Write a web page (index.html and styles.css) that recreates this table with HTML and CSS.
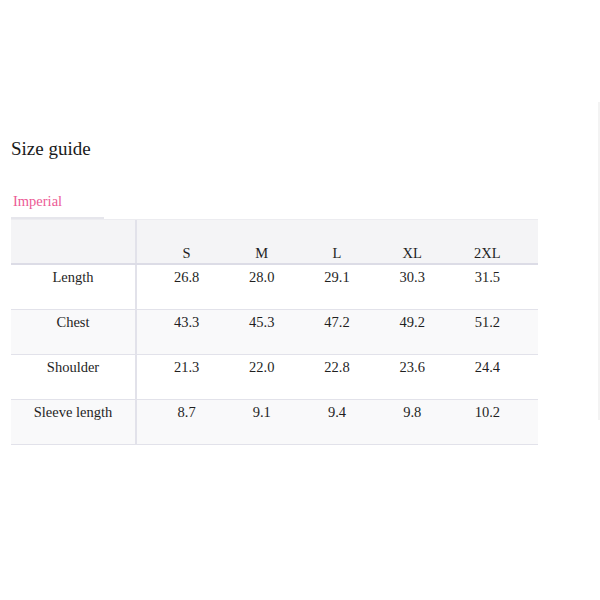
FILE: index.html
```html
<!DOCTYPE html>
<html>
<head>
<meta charset="utf-8">
<link rel="stylesheet" href="styles.css">
</head>
<body>
<div class="page">
  <h1 class="title">Size guide</h1>
  <div class="tabs"><div class="tab">Imperial</div></div>
  <div class="table">
    <div class="row head">
      <div class="label"></div>
      <div class="vals"><span>S</span><span>M</span><span>L</span><span>XL</span><span>2XL</span></div>
    </div>
    <div class="row">
      <div class="label">Length</div>
      <div class="vals"><span>26.8</span><span>28.0</span><span>29.1</span><span>30.3</span><span>31.5</span></div>
    </div>
    <div class="row alt">
      <div class="label">Chest</div>
      <div class="vals"><span>43.3</span><span>45.3</span><span>47.2</span><span>49.2</span><span>51.2</span></div>
    </div>
    <div class="row">
      <div class="label">Shoulder</div>
      <div class="vals"><span>21.3</span><span>22.0</span><span>22.8</span><span>23.6</span><span>24.4</span></div>
    </div>
    <div class="row alt">
      <div class="label">Sleeve length</div>
      <div class="vals"><span>8.7</span><span>9.1</span><span>9.4</span><span>9.8</span><span>10.2</span></div>
    </div>
  </div>
</div>
<div class="edge"></div>
</body>
</html>
```
FILE: styles.css
```css
html, body {
  margin: 0;
  padding: 0;
  background: #ffffff;
}
body {
  font-family: "Liberation Serif", "DejaVu Serif", serif;
  color: #1f1f1f;
}
.page {
  padding: 0 11px;
}
.title {
  margin: 138px 0 0 0;
  font-family: "Liberation Serif", "DejaVu Serif", serif;
  font-size: 19px;
  line-height: 22px;
  font-weight: normal;
  color: #1a1a1a;
}
.tabs {
  margin-top: 33px;
  display: flex;
}
.tab {
  width: 91px;
  padding: 0 0 7px 2px;
  font-size: 14.5px;
  line-height: 17px;
  color: #ec5a95;
  border-bottom: 2px solid #e6e6ec;
}
.table {
  width: 527px;
  border-top: 1px solid #ececf0;
}
.row {
  display: flex;
  height: 44px;
  border-bottom: 1px solid #e2e2ea;
  font-size: 14.5px;
  line-height: 17px;
}
.row.head {
  height: 43px;
  background: #f4f4f6;
  border-bottom: 2px solid #dcdce6;
  align-items: flex-end;
}
.row.alt {
  background: #f9f9fa;
}
.label {
  width: 126px;
  flex: none;
  align-self: stretch;
  border-right: 2px solid #e2e2ea;
  text-align: center;
  padding-top: 4px;
  box-sizing: border-box;
}
.head .label {
  padding-top: 0;
}
.vals {
  flex: 1;
  display: grid;
  grid-template-columns: repeat(5, 1fr);
  padding: 4px 13px 0 12px;
  text-align: center;
}
.head .vals {
  padding-top: 0;
  padding-bottom: 1px;
}
.edge {
  position: absolute;
  right: 0;
  top: 102px;
  width: 2px;
  height: 318px;
  background: #f3f3f3;
}
```
